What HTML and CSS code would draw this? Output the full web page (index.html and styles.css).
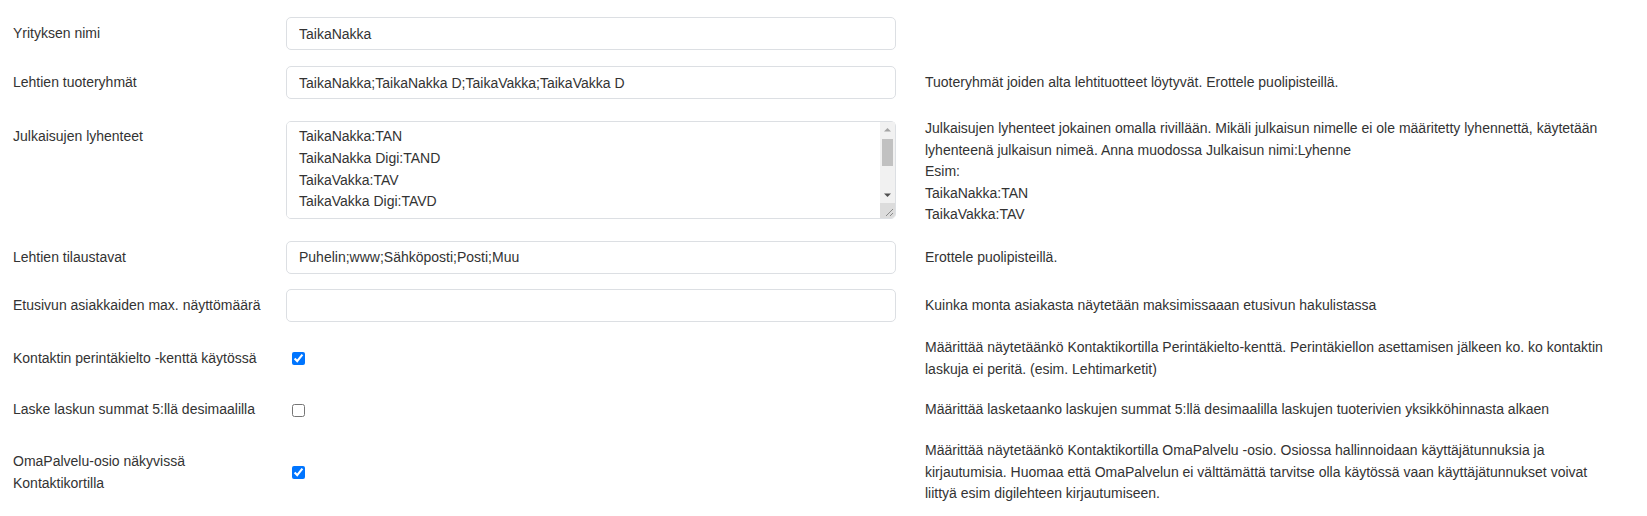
FILE: index.html
```html
<!DOCTYPE html>
<html lang="fi">
<head>
<meta charset="utf-8">
<title>Asetukset</title>
<link rel="stylesheet" href="styles.css">
</head>
<body>
<form class="settings">
  <div class="row row-top">
    <label class="lbl" for="f1">Yrityksen nimi</label>
    <div class="field"><input id="f1" class="ctl" type="text" value="TaikaNakka"></div>
    <div class="help"></div>
  </div>
  <div class="row row-top">
    <label class="lbl" for="f2">Lehtien tuoteryhmät</label>
    <div class="field"><input id="f2" class="ctl" type="text" value="TaikaNakka;TaikaNakka D;TaikaVakka;TaikaVakka D"></div>
    <div class="help">Tuoteryhmät joiden alta lehtituotteet löytyvät. Erottele puolipisteillä.</div>
  </div>
  <div class="row row-area">
    <label class="lbl lbl-top" for="f3">Julkaisujen lyhenteet</label>
    <div class="field">
      <div class="area-wrap">
        <textarea id="f3" class="ctl area">TaikaNakka:TAN
TaikaNakka Digi:TAND
TaikaVakka:TAV
TaikaVakka Digi:TAVD




</textarea>
        <div class="sb" aria-hidden="true">
          <div class="sb-btn"><svg width="15" height="15" viewBox="0 0 15 15"><path d="M4 9.5 L7.5 6 L11 9.5 Z" fill="#a3a3a3"/></svg></div>
          <div class="sb-track"><div class="sb-thumb"></div></div>
          <div class="sb-btn"><svg width="15" height="15" viewBox="0 0 15 15"><path d="M4 5.5 L7.5 9 L11 5.5 Z" fill="#505050"/></svg></div>
          <div class="sb-corner"><svg width="15" height="15" viewBox="0 0 15 15"><path d="M13 6 L6 13 M13 10 L10 13" stroke="#8a8a8a" stroke-width="1" fill="none"/></svg></div>
        </div>
      </div>
    </div>
    <div class="help">Julkaisujen lyhenteet jokainen omalla rivillään. Mikäli julkaisun nimelle ei ole määritetty lyhennettä, käytetään lyhenteenä julkaisun nimeä. Anna muodossa Julkaisun nimi:Lyhenne<br>Esim:<br>TaikaNakka:TAN<br>TaikaVakka:TAV</div>
  </div>
  <div class="row">
    <label class="lbl" for="f4">Lehtien tilaustavat</label>
    <div class="field"><input id="f4" class="ctl" type="text" value="Puhelin;www;Sähköposti;Posti;Muu"></div>
    <div class="help">Erottele puolipisteillä.</div>
  </div>
  <div class="row">
    <label class="lbl" for="f5">Etusivun asiakkaiden max. näyttömäärä</label>
    <div class="field"><input id="f5" class="ctl" type="text" value=""></div>
    <div class="help">Kuinka monta asiakasta näytetään maksimissaaan etusivun hakulistassa</div>
  </div>
  <div class="row row-check">
    <label class="lbl" for="f6">Kontaktin perintäkielto -kenttä käytössä</label>
    <div class="field"><input id="f6" class="chk" type="checkbox" checked></div>
    <div class="help">Määrittää näytetäänkö Kontaktikortilla Perintäkielto-kenttä. Perintäkiellon asettamisen jälkeen ko. ko kontaktin laskuja ei peritä. (esim. Lehtimarketit)</div>
  </div>
  <div class="row row-check row-single">
    <label class="lbl" for="f7">Laske laskun summat 5:llä desimaalilla</label>
    <div class="field"><input id="f7" class="chk" type="checkbox"></div>
    <div class="help">Määrittää lasketaanko laskujen summat 5:llä desimaalilla laskujen tuoterivien yksikköhinnasta alkaen</div>
  </div>
  <div class="row row-check">
    <label class="lbl" for="f8">OmaPalvelu-osio näkyvissä Kontaktikortilla</label>
    <div class="field"><input id="f8" class="chk" type="checkbox" checked></div>
    <div class="help">Määrittää näytetäänkö Kontaktikortilla OmaPalvelu -osio. Osiossa hallinnoidaan käyttäjätunnuksia ja<br>kirjautumisia. Huomaa että OmaPalvelun ei välttämättä tarvitse olla käytössä vaan käyttäjätunnukset voivat<br>liittyä esim digilehteen kirjautumiseen.</div>
  </div>
</form>
</body>
</html>
```

FILE: styles.css
```css
html, body {
  margin: 0;
  padding: 0;
  background: #ffffff;
}

body {
  font-family: "Liberation Sans", Arial, sans-serif;
  font-size: 14px;
  line-height: 21.6px;
  color: #333333;
}

.settings {
  display: flex;
  flex-direction: column;
  padding: 17px 15px 0 13px;
}

.row {
  display: flex;
  align-items: center;
  margin-bottom: 15px;
}

.row-top {
  margin-bottom: 16px;
}

.row-single {
  min-height: 30px;
}

.lbl {
  flex: 0 0 258px;
  padding-right: 15px;
}

.lbl-top {
  align-self: flex-start;
  padding-top: 11px;
}

.field {
  flex: 0 0 610px;
  display: flex;
  align-items: center;
}

.help {
  flex: 0 0 710px;
  margin-left: 29px;
}

.row-area .help {
  padding-top: 3px;
}

.ctl {
  box-sizing: border-box;
  width: 100%;
  height: 33px;
  margin: 0;
  padding: 4px 12px;
  border: 1px solid #dcdfe3;
  border-radius: 5px;
  background: #ffffff;
  font-family: "Liberation Sans", Arial, sans-serif;
  font-size: 14px;
  line-height: 21.6px;
  color: #333333;
  outline: none;
}

.area-wrap {
  position: relative;
  width: 100%;
}

.area {
  display: block;
  height: 98px;
  padding: 4px 28px 4px 12px;
  resize: none;
  overflow-y: scroll;
  scrollbar-width: none;
}

.area::-webkit-scrollbar {
  width: 0;
  height: 0;
}

.sb {
  position: absolute;
  top: 1px;
  right: 1px;
  bottom: 1px;
  width: 15px;
  display: flex;
  flex-direction: column;
  background: #f1f1f1;
  border-radius: 0 4px 4px 0;
}

.sb-btn {
  flex: 0 0 15px;
  height: 15px;
  background: #f1f1f1;
}

.sb-btn svg,
.sb-corner svg {
  display: block;
}

.sb-track {
  flex: 1 1 auto;
  display: flex;
  flex-direction: column;
  padding-top: 2px;
}

.sb-thumb {
  height: 27px;
  margin: 0 2px;
  background: #c1c1c1;
}

.sb-corner {
  flex: 0 0 15px;
  height: 15px;
  background: #dcdcdc;
  border-bottom-right-radius: 4px;
}

.chk {
  width: 13px;
  height: 13px;
  margin: 0 0 0 6px;
}
```
